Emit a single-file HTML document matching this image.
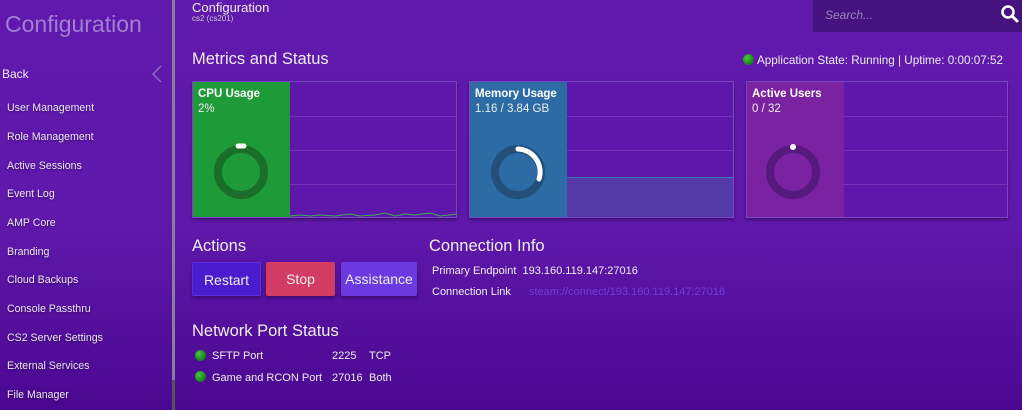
<!DOCTYPE html>
<html><head><meta charset="utf-8"><style>
*{margin:0;padding:0;box-sizing:border-box}
body{width:1022px;height:410px;overflow:hidden;font-family:"Liberation Sans",sans-serif;color:#eee;background:linear-gradient(180deg,#6019ad 0%,#5f18ab 55%,#4a0890 100%);position:relative}
.a{position:absolute;white-space:nowrap}
.div{left:172px;top:0;width:3px;height:410px;background:#85809a}
.nav{left:7px;font-size:10.6px;color:#ece6f4;text-shadow:0 1px 2px rgba(0,0,0,.4)}
.card{position:absolute;top:81px;height:137px;border:1px solid #7a45c0;background:#5e17ab;box-shadow:0 2px 3px rgba(0,0,0,.35)}
.card .l{position:absolute;left:0;top:0;width:97px;height:100%}
.card .t{position:absolute;left:5px;top:6px;font-size:11.5px;font-weight:bold;color:#fff}
.card .v{position:absolute;left:5px;top:21px;font-size:11.5px;color:#eee}
.grid{position:absolute;left:97px;right:0;height:1px;background:#6f34b8}
.btn{position:absolute;top:262px;height:34px;font-size:14px;color:#eee;text-align:center;line-height:34px;border-radius:2px;box-shadow:0 2px 3px rgba(0,0,0,.35)}
.dot{position:absolute;width:11px;height:11px;border-radius:50%;background:radial-gradient(circle at 35% 35%,#4c4 0%,#1a8a1a 60%,#0d5a0d 100%)}
.s{font-size:11px;color:#eee}
.h{font-size:16.5px;color:#eee}
</style></head><body>
<div class="a div"></div>
<div class="a" style="left:172px;top:380px;width:3px;height:30px;background:#555"></div>
<div class="a" style="left:5px;top:11px;font-size:23px;color:#a27fd3">Configuration</div>
<div class="a" style="left:2px;top:67px;font-size:12px;color:#eee">Back</div>
<svg class="a" style="left:150px;top:65px" width="14" height="18"><path d="M11 1 L3 9 L11 17" stroke="#8f6bc6" stroke-width="1.5" fill="none"/></svg>
<div class="a nav" style="top:102px">User Management</div>
<div class="a nav" style="top:131px">Role Management</div>
<div class="a nav" style="top:160px">Active Sessions</div>
<div class="a nav" style="top:188px">Event Log</div>
<div class="a nav" style="top:217px">AMP Core</div>
<div class="a nav" style="top:246px">Branding</div>
<div class="a nav" style="top:274px">Cloud Backups</div>
<div class="a nav" style="top:303px">Console Passthru</div>
<div class="a nav" style="top:332px">CS2 Server Settings</div>
<div class="a nav" style="top:360px">External Services</div>
<div class="a nav" style="top:389px">File Manager</div>

<div class="a" style="left:192px;top:0;font-size:13px;color:#eee">Configuration</div>
<div class="a" style="left:192px;top:14px;font-size:8px;color:#ccc">cs2 (cs201)</div>
<div class="a" style="left:813px;top:0;width:209px;height:32px;background:#45127f"></div>
<div class="a" style="left:825px;top:8px;font-size:12px;font-style:italic;color:#9a84bd">Search...</div>
<svg class="a" style="left:1000px;top:4px" width="20" height="20"><circle cx="8" cy="8" r="5.5" stroke="#fff" stroke-width="2.6" fill="none"/><path d="M12 12 L17 17" stroke="#fff" stroke-width="3" stroke-linecap="round"/></svg>

<div class="a h" style="left:192px;top:50px">Metrics and Status</div>
<div class="dot" style="left:743px;top:54px"></div>
<div class="a" style="left:757px;top:54px;font-size:11.7px;color:#eee">Application State: Running | Uptime: 0:00:07:52</div>

<div class="card" style="left:192px;width:265px">
<div class="l" style="background:#1f9a38"></div>
<div class="grid" style="top:34px"></div><div class="grid" style="top:68px"></div><div class="grid" style="top:102px"></div>
<div class="t">CPU Usage</div><div class="v">2%</div>
<svg class="a" style="left:18px;top:60px" width="60" height="60"><circle cx="30" cy="30" r="23" stroke="#1a6e2a" stroke-width="8" fill="none"/><path d="M27 4 L33 4" stroke="#fff" stroke-width="5" stroke-linecap="round"/></svg>
<svg class="a" style="left:97px;top:126px" width="167" height="10"><path d="M0 8 L10 7 L20 8 L30 7 L45 8 L60 6 L70 8 L85 7 L95 5 L105 8 L115 6 L125 7 L140 5 L150 8 L167 6" stroke="#3cae4c" stroke-width="1" fill="none"/></svg>
</div>
<div class="card" style="left:469px;width:265px">
<div class="l" style="background:#2c6ba4"></div>
<div class="grid" style="top:34px"></div><div class="grid" style="top:68px"></div>
<div class="a" style="left:97px;right:0;top:95px;bottom:0;background:#5439a8;border-top:1px solid #3a7ab0"></div>
<div class="t">Memory Usage</div><div class="v">1.16 / 3.84 GB</div>
<svg class="a" style="left:18px;top:60px" width="60" height="60"><circle cx="30" cy="30" r="23" stroke="#22507a" stroke-width="8" fill="none"/><path d="M30 7 A23 23 0 0 1 51 37" stroke="#fff" stroke-width="5" stroke-linecap="round" fill="none"/></svg>
</div>
<div class="card" style="left:746px;width:262px">
<div class="l" style="background:#7b22a2"></div>
<div class="grid" style="top:34px"></div><div class="grid" style="top:68px"></div><div class="grid" style="top:102px"></div>
<div class="t">Active Users</div><div class="v">0 / 32</div>
<svg class="a" style="left:16px;top:60px" width="60" height="60"><circle cx="30" cy="30" r="23" stroke="#561a7e" stroke-width="8" fill="none"/><circle cx="30" cy="5" r="3" fill="#fff"/></svg>
</div>

<div class="a h" style="left:192px;top:237px">Actions</div>
<div class="btn" style="left:192px;width:69px;background:#4a1ccd;border:1px solid #5a2fe0">Restart</div>
<div class="btn" style="left:266px;width:69px;background:#d23c64">Stop</div>
<div class="btn" style="left:341px;width:76px;background:#6b39e0">Assistance</div>

<div class="a h" style="left:429px;top:237px">Connection Info</div>
<div class="a s" style="left:432px;top:265px">Primary Endpoint&nbsp; 193.160.119.147:27016</div>
<div class="a s" style="left:432px;top:286px">Connection Link</div>
<div class="a s" style="left:529px;top:286px;color:#6d3fd9">steam://connect/193.160.119.147:27016</div>

<div class="a h" style="left:192px;top:322px">Network Port Status</div>
<div class="dot" style="left:195px;top:350px"></div>
<div class="a s" style="left:212px;top:350px">SFTP Port</div>
<div class="a s" style="left:332px;top:350px">2225</div>
<div class="a s" style="left:369px;top:350px">TCP</div>
<div class="dot" style="left:195px;top:371px"></div>
<div class="a s" style="left:212px;top:372px">Game and RCON Port</div>
<div class="a s" style="left:332px;top:372px">27016</div>
<div class="a s" style="left:369px;top:372px">Both</div>
</body></html>
